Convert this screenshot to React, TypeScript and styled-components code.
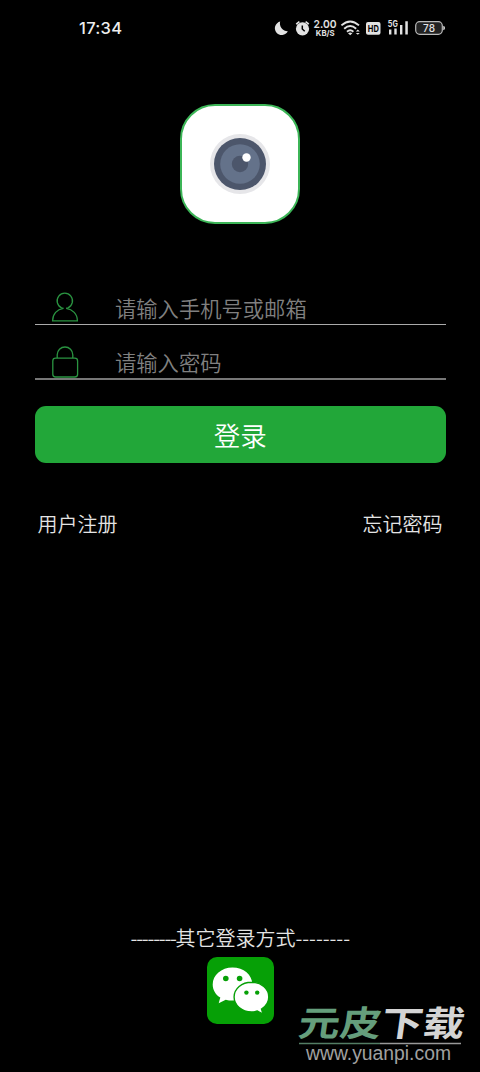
import React from 'react';
import styled, { createGlobalStyle } from 'styled-components';

const GlobalStyle = createGlobalStyle`
  * { box-sizing: border-box; }
  body { margin: 0; background: #000; }
`;

const Screen = styled.main`
  position: relative;
  display: flex;
  flex-direction: column;
  width: 480px;
  height: 1072px;
  overflow: hidden;
  background: #000;
  color: #e4e4e4;
  font-family: 'Noto Sans CJK SC', sans-serif;
  font-weight: 350;
`;

const StatusBar = styled.header`
  display: flex;
  justify-content: space-between;
  align-items: center;
  height: 56px;
  padding: 0 35px 0 79px;
  flex: none;
`;

const Clock = styled.time`
  font: 500 16.5px/24px Inter, sans-serif;
  letter-spacing: 0.3px;
  color: #eee;
`;

const StatusIcons = styled.svg`
  display: block;
  width: 172px;
  height: 24px;
  font-family: Inter, sans-serif;
`;

const Logo = styled.div`
  width: 120px;
  height: 120px;
  margin: 48px auto 0;
  flex: none;
  display: flex;
  align-items: center;
  justify-content: center;
  background: #fff;
  border: 2px solid #3cb557;
  border-radius: 35px;
`;

const Form = styled.form`
  display: flex;
  flex-direction: column;
  margin: 56px 34.5px 0 35px;
`;

const Field = styled.label<{ $height: number; $line: string; $thick: number }>`
  display: flex;
  align-items: flex-end;
  height: ${(p) => p.$height}px;
  border-bottom: ${(p) => p.$thick}px solid ${(p) => p.$line};
  padding-left: 15px;
`;

const FieldIcon = styled.svg`
  width: 30px;
  height: 34px;
  flex: none;
  fill: none;
  stroke: #2a9441;
  stroke-width: 1.3;
`;

const Input = styled.input`
  flex: 1;
  min-width: 0;
  height: 32px;
  margin-left: 35px;
  padding: 0;
  border: 0;
  outline: 0;
  background: transparent;
  color: #ddd;
  font: 350 21.3px/32px 'Noto Sans CJK SC', sans-serif;
  &::placeholder { color: #808080; opacity: 1; }
`;

const LoginButton = styled.button`
  height: 57px;
  margin-top: 26px;
  padding: 1px 0 0;
  border: 0;
  border-radius: 11px;
  background: #22a739;
  color: #fff;
  font: 350 26.5px/40px 'Noto Sans CJK SC', sans-serif;
`;

const Links = styled.nav`
  display: flex;
  justify-content: space-between;
  margin: 46px 37.5px 0;
  font-size: 20px;
  line-height: 30px;
`;

const Other = styled.section`
  display: flex;
  flex-direction: column;
  align-items: center;
  margin-top: auto;
  padding-bottom: 48px;
`;

const OtherTitle = styled.div`
  display: flex;
  font-size: 20px;
  line-height: 30px;
  margin-bottom: 4px;
`;

const Dashes = styled.span<{ $width: number; $spacing: number }>`
  width: ${(p) => p.$width}px;
  letter-spacing: ${(p) => p.$spacing}px;
  white-space: nowrap;
`;

const WechatTile = styled.button`
  display: flex;
  width: 67px;
  height: 67px;
  padding: 0;
  border: 0;
  border-radius: 10px;
  background: #06a006;
`;

const Watermark = styled.svg`
  position: absolute;
  left: 290px;
  top: 996px;
  width: 190px;
  height: 76px;
`;

function StatusGlyphs() {
  return (
    <StatusIcons viewBox="273 16 172 24" fill="#e2e2e2">
      <path d="M280.2 21.6A6.8 6.8 0 1 0 287.8 31.2A7.6 7.6 0 0 1 280.2 21.6Z" />
      <circle cx="302.5" cy="28.8" r="6.6" />
      <path d="M296.2 24.2L299.4 21.6M308.8 24.2L305.6 21.6" stroke="#e2e2e2" strokeWidth="1.6" />
      <path d="M302.3 25.5V29L304.7 31.2" stroke="#000" strokeWidth="1.5" fill="none" />
      <text x="313.6" y="28" fontSize="11" fontWeight="600" textLength="23" lengthAdjust="spacingAndGlyphs">2.00</text>
      <text x="315.8" y="35.8" fontSize="8" fontWeight="700" textLength="18.8" lengthAdjust="spacingAndGlyphs">KB/S</text>
      <g fill="none" stroke="#e2e2e2" strokeWidth="1.9">
        <path d="M341.4 25.4Q350.2 17.4 359 25.4" />
        <path d="M344.2 28.7Q350.2 23.3 356.2 28.7" />
        <path d="M347 31.7Q350.2 28.9 353.4 31.7" />
      </g>
      <path d="M348 33.2Q350.2 31.8 352.4 33.2L350.2 35.2Z" />
      <path d="M355.8 31.4L357.8 29.6L359.8 31.4ZM355.8 33L357.8 34.8L359.8 33Z" />
      <rect x="366" y="22" width="14.5" height="12.7" rx="2" />
      <text x="367.8" y="31.8" fontSize="9.5" fontWeight="700" fill="#000" textLength="11" lengthAdjust="spacingAndGlyphs">HD</text>
      <text x="387.8" y="26.8" fontSize="8.5" fontWeight="700" textLength="10" lengthAdjust="spacingAndGlyphs">5G</text>
      <path d="M389 29.5h2.4v5h-2.4zM394.3 28.5h2.4v6h-2.4zM400 25h2.4v9.5h-2.4zM405.3 21.2h2.5v13.3h-2.5z" />
      <rect x="415.7" y="21.7" width="26.6" height="12.6" rx="4" fill="#222" stroke="#bbb" strokeWidth="1.2" />
      <path d="M443.3 25.8Q445 26 445 28T443.3 30.2Z" />
      <text x="429" y="31.6" fontSize="10" fontWeight="500" textAnchor="middle">78</text>
    </StatusIcons>
  );
}

function Lens() {
  return (
    <svg width="62" height="62" viewBox="-31 -31 62 62">
      <circle r="30" fill="#e6e6e9" />
      <circle r="26" fill="#4c566b" />
      <circle r="19.8" fill="#64728a" />
      <circle r="8.2" fill="#4c566b" />
      <circle cx="6.5" cy="-6.5" r="4.2" fill="#fff" />
    </svg>
  );
}

function WechatLogo() {
  return (
    <svg width="67" height="67" viewBox="0 0 67 67" fill="#fff">
      <path d="M25.5 10.5C14.4 10.5 5.7 18.1 5.7 27.4C5.7 32.8 8.7 37.6 13.3 40.6L11.7 46.3L18.7 42.7C20.9 43.3 23.2 43.6 25.5 43.6C36.6 43.6 45.3 36.5 45.3 27.2S36.6 10.5 25.5 10.5Z" />
      <path d="M44.5 25.2C34.7 25.2 27.1 31.8 27.1 40S34.7 54.9 44.5 54.9C46.5 54.9 48.5 54.6 50.3 54L56 57L54.5 52C59 49.3 61.8 45 61.8 40C61.8 31.8 54.3 25.2 44.5 25.2Z" stroke="#06a006" strokeWidth="1.4" />
      <g fill="#06a006">
        <circle cx="18.8" cy="21.5" r="2.8" />
        <circle cx="32.6" cy="21.5" r="2.8" />
        <circle cx="39.4" cy="35.6" r="2.2" />
        <circle cx="50.2" cy="35.6" r="2.2" />
      </g>
    </svg>
  );
}

export default function App() {
  return (
    <>
      <GlobalStyle />
      <Screen>
        <StatusBar>
          <Clock>17:34</Clock>
          <StatusGlyphs />
        </StatusBar>
        <Logo><Lens /></Logo>
        <Form>
          <Field $height={45} $line="#aaa" $thick={1}>
            <FieldIcon viewBox="50 290 30 34">
              <path d="M63.4 308.3L61.6 307.8A7.7 7.7 0 1 1 68 307.8L66.2 308.3" />
              <path d="M63.4 308.3C57 309.3 52.6 314 52.6 320.8H77.4C77.4 314 72.6 309.3 66.2 308.3" />
            </FieldIcon>
            <Input placeholder="请输入手机号或邮箱" />
          </Field>
          <Field $height={55} $line="#777" $thick={2}>
            <FieldIcon viewBox="50 344 30 34">
              <path d="M57.2 358V354.8A7.8 7.8 0 0 1 72.8 354.8V358" />
              <rect x="52.8" y="358.2" width="24.8" height="18.8" rx="2.8" />
            </FieldIcon>
            <Input type="password" placeholder="请输入密码" />
          </Field>
          <LoginButton type="button">登录</LoginButton>
        </Form>
        <Links>
          <span>用户注册</span>
          <span>忘记密码</span>
        </Links>
        <Other>
          <OtherTitle>
            <Dashes $width={45} $spacing={-1.2}>--------</Dashes>
            <span>其它登录方式</span>
            <Dashes $width={54} $spacing={-0.05}>--------</Dashes>
          </OtherTitle>
          <WechatTile type="button" aria-label="微信"><WechatLogo /></WechatTile>
        </Other>
        <Watermark viewBox="290 996 190 76">
          <g transform="translate(297 1035.5) skewX(-8)" fontFamily="'Noto Sans CJK SC', sans-serif" fontWeight="700" fontSize="41.5">
            <text x="0" y="0" fill="#659e7c" textLength="83" transform="scale(1 .84)">元皮</text>
            <text x="83" y="0" fill="#d4d4d4" textLength="83" transform="scale(1 .84)">下载</text>
          </g>
          <path d="M299 1043.5H380" stroke="#537d64" strokeWidth="1.3" />
          <path d="M380 1043.5H461" stroke="#999" strokeWidth="1.3" />
          <text x="306" y="1060" fill="#a0a0a0" fontFamily="'Liberation Sans', sans-serif" fontSize="19.5" textLength="145" lengthAdjust="spacingAndGlyphs">www.yuanpi.com</text>
        </Watermark>
      </Screen>
    </>
  );
}
